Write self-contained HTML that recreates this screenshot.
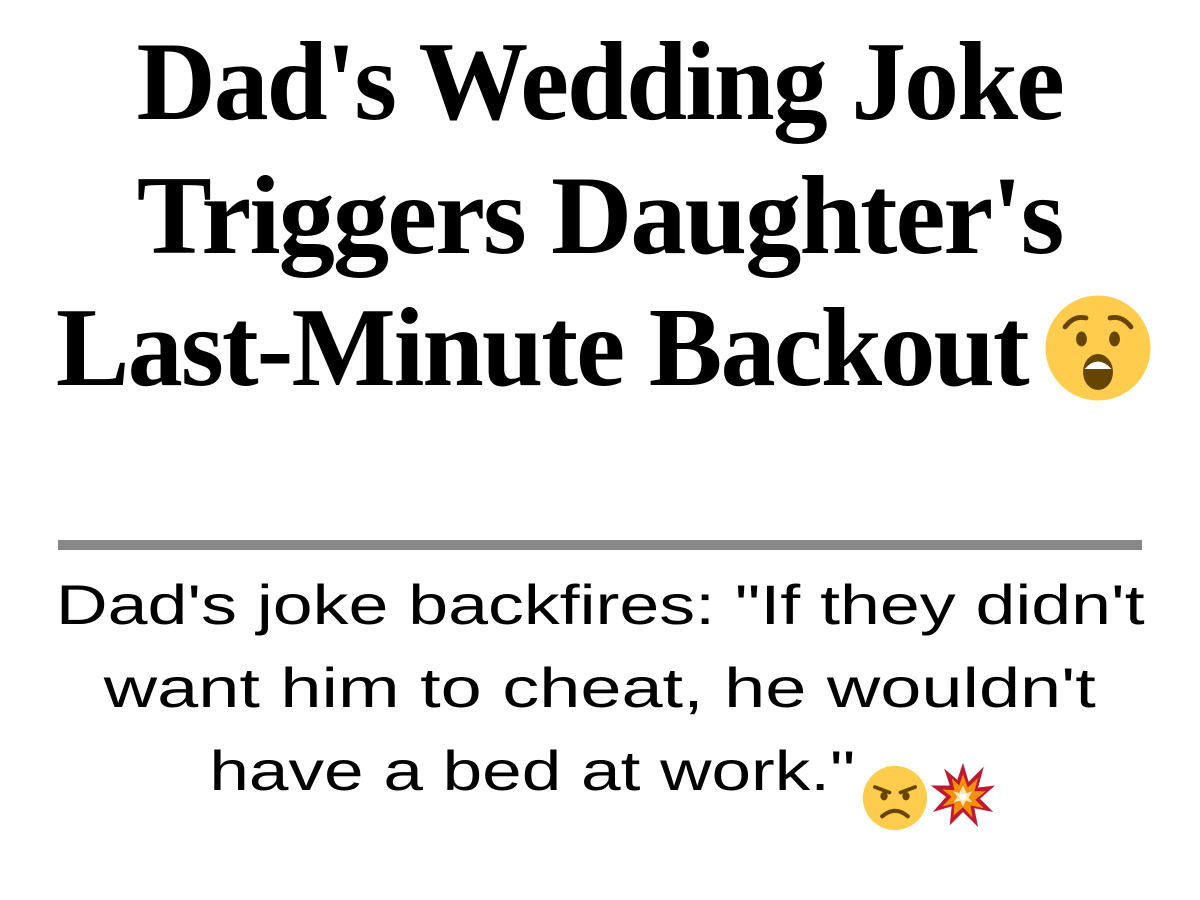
<!DOCTYPE html>
<html><head><meta charset="utf-8"><style>
html,body{margin:0;padding:0;background:#fff;width:1200px;height:900px;overflow:hidden;position:relative}
.t{position:absolute;left:0;width:1200px;text-align:center;font-family:"Liberation Serif",serif;font-weight:bold;font-size:112px;line-height:133px;color:#000;white-space:nowrap;letter-spacing:-2px}
.t span{display:inline-block;transform-origin:center}
.b{position:absolute;left:0;width:1200px;text-align:center;font-family:"Liberation Sans",sans-serif;font-size:56px;line-height:83px;color:#000;white-space:nowrap}
.b span{display:inline-block;transform-origin:center}
.bar{position:absolute;left:58px;top:540px;width:1084px;height:10px;background:#888}
svg{position:absolute}
</style></head><body>
<div class="t" style="top:16px"><span style="transform:scaleX(0.98)">Dad's Wedding Joke</span></div>
<div class="t" style="top:150px"><span style="transform:scaleX(1.005)">Triggers Daughter's</span></div>
<div class="t" style="top:282px;left:-58px"><span style="transform:scaleX(0.986)">Last-Minute Backout</span></div>
<svg style="left:1044px;top:294px" width="108" height="108" viewBox="0 0 36 36">
<circle cx="18" cy="18" r="17.5" fill="#FFCC4D"/>
<path d="M7 11 Q10 7 14 8" stroke="#664500" stroke-width="1.6" fill="none" stroke-linecap="round"/>
<path d="M29 11 Q26 7 22 8" stroke="#664500" stroke-width="1.6" fill="none" stroke-linecap="round"/>
<ellipse cx="12.5" cy="15" rx="1.8" ry="2.5" fill="#664500"/>
<ellipse cx="23.5" cy="15" rx="1.8" ry="2.5" fill="#664500"/>
<ellipse cx="18" cy="26" rx="5" ry="6" fill="#664500"/>
<path d="M13.5 25 Q18 20 22.5 25 Z" fill="#fff"/>
</svg>
<div class="bar"></div>
<div class="b" style="top:563px"><span style="transform:scaleX(1.28)">Dad's joke backfires: "If they didn't</span></div>
<div class="b" style="top:646px"><span style="transform:scaleX(1.32)">want him to cheat, he wouldn't</span></div>
<div class="b" style="top:729px;left:-68px"><span style="transform:scaleX(1.27)">have a bed at work."</span></div>
<svg style="left:862px;top:765px" width="66" height="66" viewBox="0 0 36 36">
<circle cx="18" cy="18" r="17.5" fill="#FFCC4D"/>
<path d="M7 12 L15 15 M29 12 L21 15" stroke="#664500" stroke-width="2" stroke-linecap="round"/>
<ellipse cx="12" cy="17" rx="2" ry="2.3" fill="#664500"/>
<ellipse cx="24" cy="17" rx="2" ry="2.3" fill="#664500"/>
<path d="M11 28 Q18 22 25 28" stroke="#664500" stroke-width="2.2" fill="none" stroke-linecap="round"/>
</svg>
<svg style="left:929px;top:760px" width="68" height="70" viewBox="0 0 36 36">
<path d="M18 1 L21 11 L29 3 L26 14 L35 13 L27 20 L34 27 L24 25 L26 35 L18 27 L11 34 L12 24 L2 27 L9 19 L1 13 L11 13 L8 4 L15 10 Z" fill="#BE1931"/>
<path d="M18 7 L20.5 14 L26 9 L24 16 L30 16 L24.5 20.5 L29 25 L22 23.5 L23 30 L18 24.5 L13 29 L13.5 22.5 L7 24 L12 19 L7 15 L13.5 15.5 L12 9 L16 13 Z" fill="#F4900C"/>
<path d="M18 13 L20 17 L23 16 L21 19.5 L23 22 L19.5 21 L18 24 L16.5 21 L13 22 L15 19 L13 16 L16 17 Z" fill="#FFE8B6"/>
<circle cx="18" cy="19" r="1.8" fill="#fff"/>
</svg>
</body></html>
